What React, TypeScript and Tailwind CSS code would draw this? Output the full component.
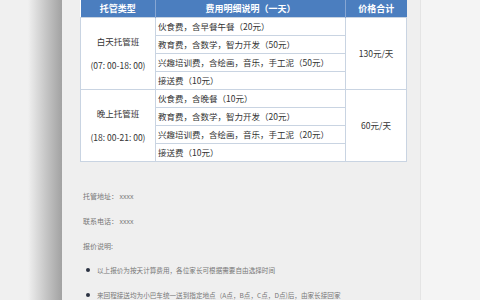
import React from 'react';

type Group = {
  name: string;
  time: string;
  items: string[];
  price: string;
};

const groups: Group[] = [
  {
    name: '白天托管班',
    time: '(07: 00-18: 00)',
    items: ['伙食费，含早餐午餐（20元）', '教育费，含数学，智力开发（50元）', '兴趣培训费，含绘画，音乐，手工泥（50元）', '接送费（10元）'],
    price: '130元/天',
  },
  {
    name: '晚上托管班',
    time: '(18: 00-21: 00)',
    items: ['伙食费，含晚餐（10元）', '教育费，含数学，智力开发（20元）', '兴趣培训费，含绘画，音乐，手工泥（20元）', '接送费（10元）'],
    price: '60元/天',
  },
];

const notes = [
  '以上报价为按天计算费用，各位家长可根据需要自由选择时间',
  '来回程接送均为小巴车统一送到指定地点（A点，B点，C点，D点)后，由家长接回家',
];

const App: React.FC = () => {
  return (
    <div className="flex h-[300px] w-[480px] overflow-hidden bg-[#f4f4f4] font-['Noto_Sans_CJK_SC',sans-serif]">
      <div className="w-[62px] shrink-0 bg-linear-to-r from-[#f0f0f0] from-45% to-[#a2a2a2]" />

      <div className="w-[358px] shrink-0 bg-[#efefef] pl-[18px]">
        <table className="w-[326px] table-fixed border-collapse bg-white text-[8.5px] text-[#333]">
          <colgroup>
            <col className="w-[75px]" />
            <col className="w-[190px]" />
            <col className="w-[61px]" />
          </colgroup>
          <thead>
            <tr className="h-[17px] bg-[#4b7ebf] text-[9px] font-bold text-white">
              <th className="border-r border-[#86a6d3] p-0 font-bold">托管类型</th>
              <th className="border-r border-[#86a6d3] p-0 font-bold">费用明细说明（一天）</th>
              <th className="p-0 font-bold">价格合计</th>
            </tr>
          </thead>
          <tbody>
            {groups.map((g) =>
              g.items.map((item, i) => (
                <tr key={g.name + i} className="h-[18px]">
                  {i === 0 && (
                    <td rowSpan={4} className="border border-[#c9d4e2] p-0 text-center">
                      <div className="flex flex-col items-center gap-[13px] leading-[11px]">
                        <span>{g.name}</span>
                        <span>{g.time}</span>
                      </div>
                    </td>
                  )}
                  <td className="border border-[#c9d4e2] py-0 pl-[2px] leading-[11px] whitespace-nowrap">{item}</td>
                  {i === 0 && (
                    <td rowSpan={4} className="border border-[#c9d4e2] p-0 text-center">
                      {g.price}
                    </td>
                  )}
                </tr>
              ))
            )}
          </tbody>
        </table>

        <div className="mt-[29px] pl-[3px] text-[7px] leading-[10px] text-[#777]">
          <p>托管地址： xxxx</p>
          <p className="mt-[15px]">联系电话： xxxx</p>
          <p className="mt-[15px]">报价说明:</p>
          <ul className="mt-[14px] flex flex-col gap-[15px] text-[6.6px]">
            {notes.map((n) => (
              <li key={n} className="flex items-center">
                <span className="ml-[3px] mr-[7px] h-[4px] w-[4px] shrink-0 rounded-full bg-[#2b3242]" />
                <span className="whitespace-nowrap">{n}</span>
              </li>
            ))}
          </ul>
        </div>
      </div>

      <div className="flex-1 border-l border-[#e4e4e4] bg-[#f4f4f4]" />
    </div>
  );
};

export default App;
